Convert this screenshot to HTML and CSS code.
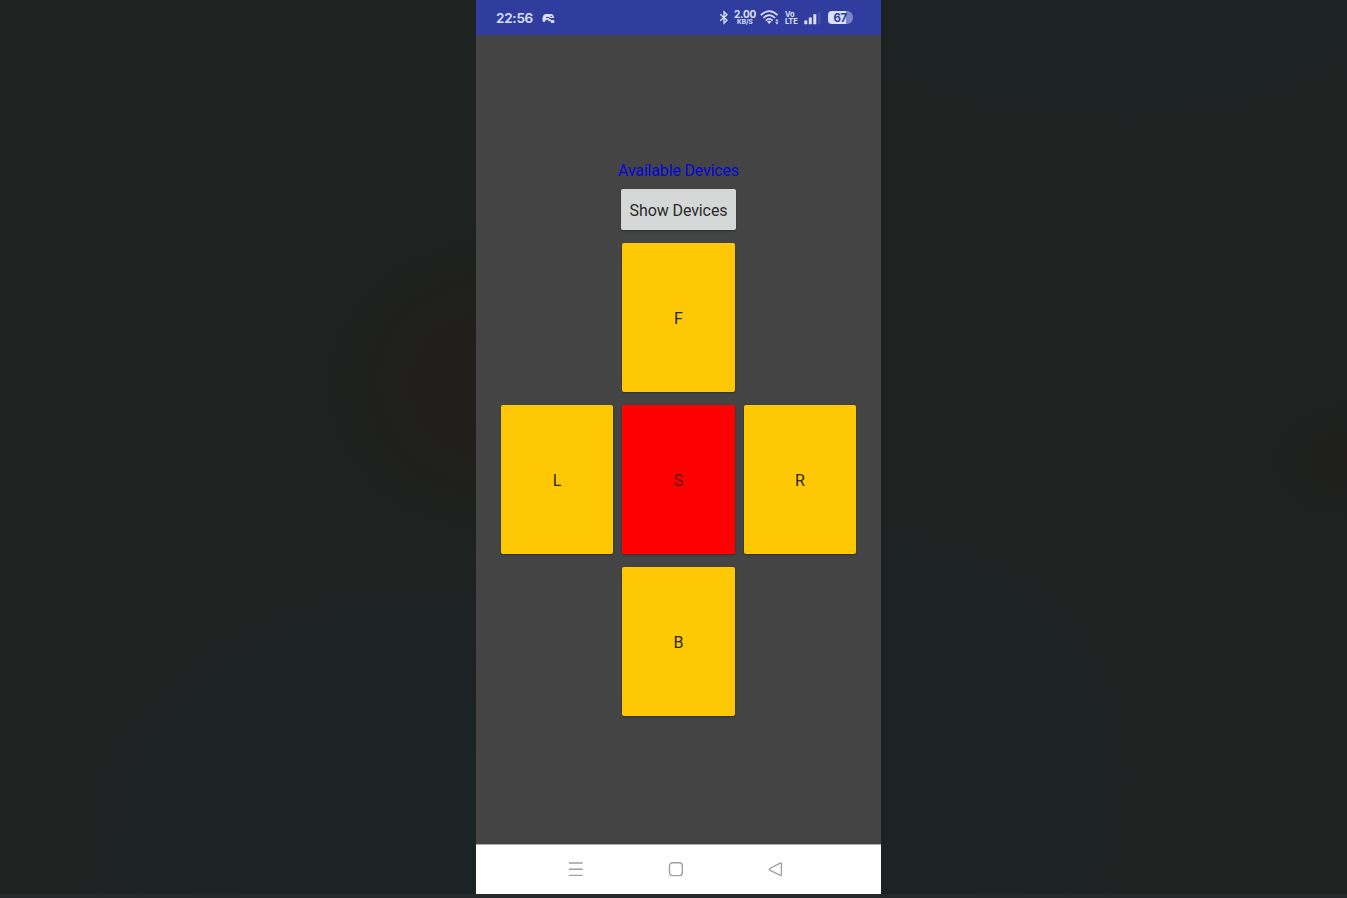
FILE: index.html
```html
<!DOCTYPE html>
<html lang="en">
<head>
<meta charset="utf-8">
<title>Available Devices</title>
<link rel="stylesheet" href="styles.css">
</head>
<body>
<main class="phone">
  <header class="status">
    <span class="clock">22:56</span>
    <svg class="game" width="13" height="12" viewBox="0 0 13 12"><path d="M.8 9.800C-.1 5.500 1 2.200 4 1.900h4.500C10.900 1.900 11.900 3.500 12.200 6H7V7.700H4.300L2.400 9.900Z" fill="currentColor"/><path d="M4 5.400h3.400M8.500 4.400h1.800" stroke="#303c9e" stroke-width="1"/><path d="M6.300 7h2.400v2.200H6.300zM8.900 8h3.300v3H8.900z" fill="currentColor"/></svg>
    <span class="spacer"></span>
    <svg class="bluetooth" width="10" height="15" viewBox="0 0 10 15"><path d="M1.200 4.300 8 10.300 5 13.200V1.800L8 4.700 1.200 10.700" fill="none" stroke="currentColor" stroke-width="1.300"/></svg>
    <span class="speed"><b>2.00</b><small>KB/S</small></span>
    <svg class="wifi" width="20" height="15" viewBox="0 0 20 15"><g fill="none" stroke="currentColor" stroke-width="1.700"><path d="M.8 5.100Q9.200-2.900 17.600 5.100"/><path d="M3.300 8Q9.200 2.300 15.100 8"/><path d="M5.800 10.600Q9.200 7.300 12.600 10.600"/></g><path d="m6.900 11.600q2.300-1.800 4.600 0L9.200 14Z" fill="currentColor"/><path d="m15.200 11.300 1.700-2.200 1.700 2.200zM15.200 12.200h3.400l-1.700 2.200z" fill="currentColor"/></svg>
    <span class="volte"><span>Vo</span><span>LTE</span></span>
    <svg class="signal" width="18" height="14" viewBox="0 0 18 14"><path d="M.3 9.400h3V13.300H.3zM4.800 6.500h3v6.800h-3zM9.300 3.200h3V13.300h-3z" fill="currentColor"/><path d="M14.200 1h2.300v12.300h-2.300z" fill="#4751aa"/></svg>
    <span class="battery">67</span>
  </header>
  <section class="screen">
    <h1 class="title">Available Devices</h1>
    <button class="show">Show Devices</button>
    <div class="pad">
      <button class="key forward">F</button>
      <button class="key left">L</button>
      <button class="key stop">S</button>
      <button class="key right">R</button>
      <button class="key back">B</button>
    </div>
  </section>
  <nav class="navbar">
    <svg width="16" height="16" viewBox="0 0 16 16"><path d="M.9 2h13.800M.9 8.200h13.800M.9 14.400h13.800"/></svg>
    <svg width="16" height="16" viewBox="0 0 16 16"><rect x="1.500" y="1.800" width="12.800" height="12.800" rx="2.800"/></svg>
    <svg width="16" height="16" viewBox="0 0 16 16"><path d="M1.900 7.500 12.200 2.100Q13.400 1.600 13.400 2.900V13.500Q13.400 14.900 12.200 14.300L1.900 9.100Q.8 8.300 1.900 7.500Z"/></svg>
  </nav>
</main>
</body>
</html>
```
FILE: styles.css
```css
* { box-sizing: border-box; }
body {
  margin: 0;
  height: 898px;
  overflow: hidden;
  font-family: Roboto, "Liberation Sans", sans-serif;
  border-bottom: 4px solid #25292b;
  background:
    radial-gradient(ellipse 190px 170px at 490px 385px, #211f1c 25%, transparent),
    radial-gradient(ellipse 380px 300px at 430px 850px, #1b2325 20%, transparent),
    radial-gradient(ellipse 270px 280px at 890px 780px, #1b2325 20%, transparent),
    radial-gradient(ellipse 330px 140px at 1110px 0, #1b2325, transparent),
    radial-gradient(ellipse 90px 70px at 1347px 460px, #201f1d, transparent),
    #1e2221;
}
.phone {
  display: flex;
  flex-direction: column;
  width: 405px;
  height: 894px;
  margin-left: 476px;
  background: #444;
}
.status {
  display: flex;
  align-items: center;
  flex: 0 0 34.500px;
  padding: 1px 28px 0 20px;
  background: #303c9e;
  color: #dce0ff;
}
.clock { width: 37px; font: 600 13.500px/18px Inter, sans-serif; letter-spacing: -.25px; white-space: nowrap; }
.game { margin-left: 9px; }
.spacer { flex: 1; }
.bluetooth { margin-right: 5px; }
.speed { display: flex; flex-direction: column; align-items: center; width: 22px; margin-right: 4px; font-family: Inter, sans-serif; }
.speed b { font-size: 10px; line-height: 9px; font-weight: 700; letter-spacing: -.2px; }
.speed small { font-size: 6.500px; line-height: 7px; font-weight: 700; }
.wifi { margin-right: 5px; }
.volte { display: flex; flex-direction: column; width: 14px; margin-right: 5px; padding-top: 1px; font: 700 7.500px/7px Inter, sans-serif; letter-spacing: -.2px; }
.signal { margin-right: 6px; }
.battery {
  width: 25px;
  height: 13px;
  padding-right: 1px;
  border-radius: 4px 6px 6px 4px;
  background: linear-gradient(90deg, #dce0ff 72%, #7c85c9 72%);
  color: #303c9e;
  font: 700 11.500px/14px Inter, sans-serif;
  letter-spacing: -.6px;
  text-align: center;
}
.screen { display: flex; flex: 1; flex-direction: column; align-items: center; padding-top: 126.500px; }
.title { margin: 0; color: #0505dc; font-size: 16px; font-weight: 400; line-height: 20px; letter-spacing: -.17px; }
.show, .key {
  padding: 3px 0 0;
  border: 0;
  border-radius: 2px;
  color: #292929;
  font: 400 16px/20px Roboto, "Liberation Sans", sans-serif;
  box-shadow: 0 1px 2px rgba(0, 0, 0, .3);
}
.show { width: 115.500px; height: 40.500px; margin-top: 8px; background: #d6d8d7; letter-spacing: -.1px; }
.pad {
  display: grid;
  grid-template: "a f b" 148.500px "l s r" 148.500px "c k d" 148.500px / 112.500px 112.500px 112.500px;
  gap: 13.500px 9px;
  margin-top: 13.500px;
}
.key { background: #ffc805; }
.forward { grid-area: f; }
.left { grid-area: l; }
.stop { grid-area: s; background: #f00; color: #5c1010; }
.right { grid-area: r; }
.back { grid-area: k; }
.navbar {
  display: flex;
  flex: 0 0 50px;
  align-items: center;
  justify-content: space-between;
  padding: 0 97px 1px 92px;
  border-top: 1px solid #aaa;
  background: #fff;
}
.navbar svg { fill: none; stroke: #a0a0a0; stroke-width: 1.400; }
```
